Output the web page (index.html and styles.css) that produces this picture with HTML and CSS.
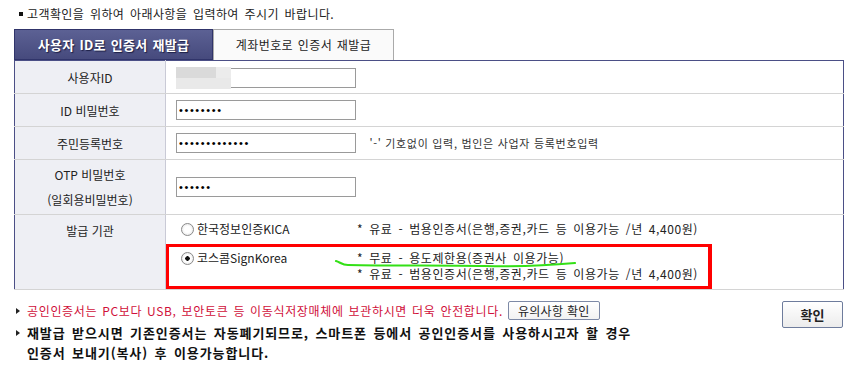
FILE: index.html
```html
<!DOCTYPE html>
<html lang="ko">
<head>
    <meta charset="UTF-8">
    <title>인증서 재발급</title>
    <link rel="stylesheet" href="styles.css">
</head>
<body>
<div class="page">
    <p class="notice">고객확인을 위하여 아래사항을 입력하여 주시기 바랍니다.</p>

    <div class="tabs">
        <div class="tab tab-active">사용자 ID로 인증서 재발급</div>
        <div class="tab">계좌번호로 인증서 재발급</div>
    </div>

    <table class="form-table">
        <tr class="row">
            <th>사용자ID</th>
            <td>
                <span class="masked">
                    <input type="text" class="field" value="">
                    <span class="blur"></span>
                </span>
            </td>
        </tr>
        <tr class="row">
            <th>ID 비밀번호</th>
            <td><input type="password" class="field" value="12345678"></td>
        </tr>
        <tr class="row">
            <th>주민등록번호</th>
            <td>
                <input type="password" class="field" value="1234567890123">
                <span class="hint">'-' 기호없이 입력, 법인은 사업자 등록번호입력</span>
            </td>
        </tr>
        <tr class="row row-tall">
            <th>OTP 비밀번호<br>(일회용비밀번호)</th>
            <td><input type="password" class="field" value="123456"></td>
        </tr>
        <tr class="row row-issuer">
            <th>발급 기관</th>
            <td class="issuer-cell">
                <div class="option">
                    <label class="opt-name"><input type="radio" name="ca" class="radio">한국정보인증KICA</label>
                    <div class="opt-desc">* 유료 - 범용인증서(은행,증권,카드 등 이용가능 /년 4,400원)</div>
                </div>
                <div class="option option-marked">
                    <label class="opt-name"><input type="radio" name="ca" class="radio" checked>코스콤SignKorea</label>
                    <div class="opt-desc">
                        * 무료 - 용도제한용(증권사 이용가능)<br>
                        * 유료 - 범용인증서(은행,증권,카드 등 이용가능 /년 4,400원)
                    </div>
                    <svg class="scribble" width="250" height="12" viewBox="0 0 250 12">
                        <path d="M2 3 C6 4 8 7 14 7 C60 8 110 7 150 8 C190 9 220 7 241 5" fill="none" stroke="#33e016" stroke-width="2.2" stroke-linecap="round"/>
                    </svg>
                </div>
            </td>
        </tr>
    </table>

    <div class="bottom">
        <ul class="notes">
            <li class="note-red">공인인증서는 PC보다 USB, 보안토큰 등 이동식저장매체에 보관하시면 더욱 안전합니다. <button type="button" class="btn-small">유의사항 확인</button></li>
            <li class="note-bold">재발급 받으시면 기존인증서는 자동폐기되므로, 스마트폰 등에서 공인인증서를 사용하시고자 할 경우<br>인증서 보내기(복사) 후 이용가능합니다.</li>
        </ul>
        <button type="button" class="btn-confirm">확인</button>
    </div>
</div>
</body>
</html>
```

FILE: styles.css
```css
body {
    margin: 0;
    font-family: "Noto Sans CJK KR", "Noto Sans", sans-serif;
    font-size: 12px;
    color: #222;
    background-color: #fff;
}

.page {
    width: 830px;
    margin-left: 14px;
}

.notice {
    margin: 0;
    height: 29px;
    line-height: 28px;
    padding-left: 13px;
    position: relative;
    word-spacing: 2px;
    letter-spacing: 0.4px;
}

.notice::before {
    content: "";
    position: absolute;
    left: 5px;
    top: 12px;
    width: 4px;
    height: 4px;
    background-color: #111;
}

.tabs {
    display: flex;
}

.tab {
    box-sizing: border-box;
    width: 181px;
    height: 31px;
    line-height: 29px;
    text-align: center;
    border: 1px solid #aaa;
    border-bottom: none;
    background-color: #fafafa;
    word-spacing: 1px;
    letter-spacing: 0.4px;
}

.tab-active {
    width: 199px;
    border: 1px solid #30346a;
    background: linear-gradient(#5c6194, #464a7d);
    color: #fff;
    font-weight: bold;
    font-size: 13px;
    letter-spacing: 0.3px;
    text-shadow: 1px 1px 1px #1c1f45;
}

.form-table {
    width: 830px;
    border-collapse: collapse;
    border: 1px solid #4b4f86;
}

.form-table th {
    width: 150px;
    padding: 0;
    font-weight: normal;
    text-align: center;
    background-color: #eeeff4;
    border-right: 1px solid #c9cad6;
    border-bottom: 1px solid #d4d4d4;
    line-height: 25px;
}

.form-table td {
    padding: 0 0 0 10px;
    border-bottom: 1px solid #d4d4d4;
}

.row {
    height: 33px;
}

.row-tall {
    height: 55px;
}

.row-issuer th {
    vertical-align: top;
    padding-top: 3px;
}

.field {
    box-sizing: border-box;
    width: 180px;
    height: 20px;
    margin: 0;
    padding: 0 2px;
    border: 1px solid #9a9a9a;
    font-size: 11px;
    letter-spacing: 1.6px;
    vertical-align: middle;
}

.masked {
    position: relative;
    display: inline-block;
    vertical-align: middle;
}

.masked .blur {
    position: absolute;
    left: 0;
    top: 0;
    width: 55px;
    height: 22px;
    background:
        linear-gradient(to right, #dadada 0 40px, #ececec 40px 55px) top / 55px 11px no-repeat,
        linear-gradient(to right, #e9e9e9 0 55px) bottom / 55px 11px no-repeat;
}

.hint {
    margin-left: 10px;
    font-size: 11px;
    color: #333;
    letter-spacing: 0.7px;
    vertical-align: middle;
}

.issuer-cell.issuer-cell {
    padding: 6px 0 0;
    vertical-align: top;
}

.option {
    display: flex;
    align-items: flex-start;
    line-height: 16px;
    padding-left: 15px;
}

.option-marked {
    position: relative;
    width: 527px;
    margin-top: 7px;
    padding: 3px 0 4px 12px;
    border: 3px solid #ff0000;
    border-right-width: 4px;
}

.opt-name {
    width: 176px;
    height: 16px;
    display: flex;
    align-items: center;
}

.opt-desc {
    word-spacing: 2px;
    letter-spacing: 0.6px;
}

.radio {
    appearance: none;
    box-sizing: border-box;
    width: 13px;
    height: 13px;
    margin: 0 3px 0 0;
    border: 1px solid #8a8a8a;
    border-radius: 50%;
    background: radial-gradient(#fff 40%, #dcdcdc);
}

.radio:checked {
    background: radial-gradient(#111 0 2px, #fff 2.5px 45%, #dcdcdc);
}

.scribble {
    position: absolute;
    left: 165px;
    top: 11px;
}

.bottom {
    display: flex;
    justify-content: space-between;
    margin-top: 11px;
}

.notes {
    margin: 0;
    padding: 0;
    list-style: none;
}

.notes li {
    position: relative;
    padding-left: 13px;
    line-height: 20px;
}

.notes li::before {
    content: "";
    position: absolute;
    left: 2px;
    top: 7px;
    border-left: 4px solid #222;
    border-top: 3px solid transparent;
    border-bottom: 3px solid transparent;
}

.note-red {
    color: #d0103a;
    word-spacing: 1px;
    letter-spacing: 0.65px;
}

.note-bold {
    margin-top: 2px;
    font-weight: bold;
    font-size: 13px;
    color: #111;
    word-spacing: 2px;
    letter-spacing: 0.9px;
}

.btn-small {
    height: 19px;
    padding: 0 9px;
    font-family: inherit;
    font-size: 12px;
    letter-spacing: 0.3px;
    color: #222;
    background: linear-gradient(#fff, #f2f2f2);
    border: 1px solid #7d89a6;
    border-radius: 2px;
    vertical-align: top;
}

.btn-confirm {
    width: 61px;
    height: 27px;
    margin-right: 1px;
    font-family: inherit;
    font-size: 13px;
    font-weight: bold;
    color: #222;
    background: linear-gradient(#fff, #ececec);
    border: 1px solid #6e7c9c;
    border-radius: 2px;
}
```
